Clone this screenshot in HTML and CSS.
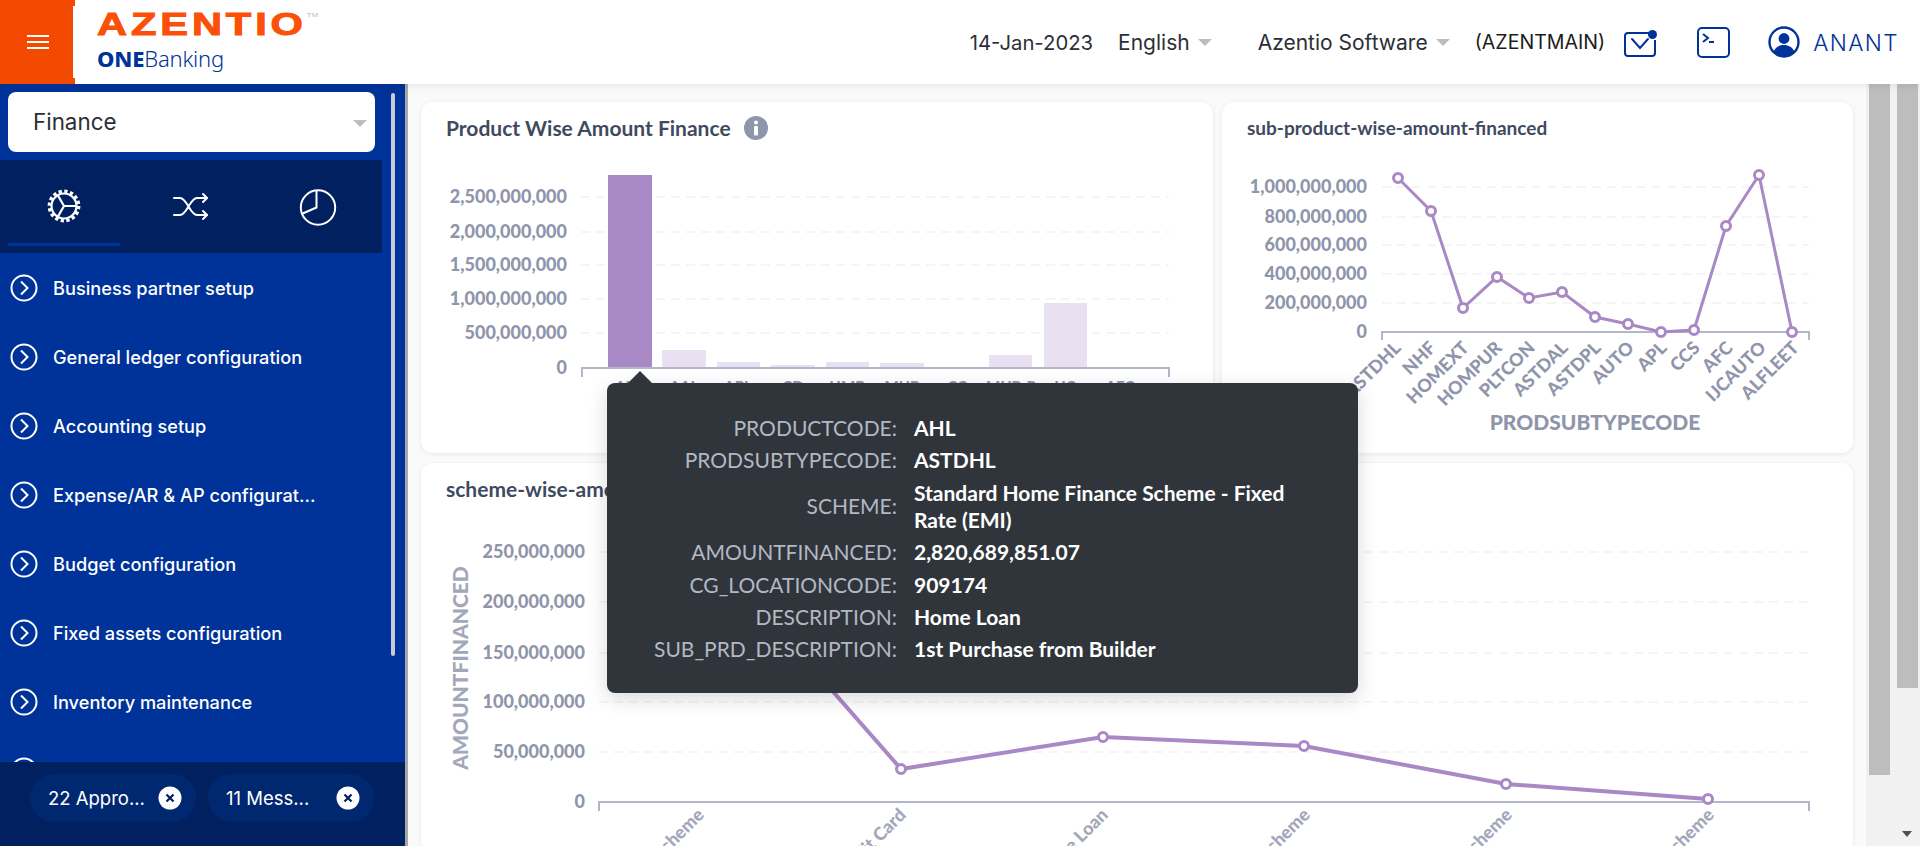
FILE: index.html
```html
<!DOCTYPE html>
<html lang="en">
<head>
<meta charset="utf-8">
<title>Azentio ONEBanking</title>
<link rel="stylesheet" href="styles.css">
</head>
<body>
<header class="topbar">
  <button class="burger" aria-label="Menu"><span></span><span></span><span></span></button>
  <div class="logo">
    <div class="logo-main">AZENTIO<sup>TM</sup></div>
    <div class="logo-sub"><b>ONE</b>Banking</div>
  </div>
  <div class="top-right">
    <span class="top-date">14-Jan-2023</span>
    <span class="top-drop lang">English<i class="caret"></i></span>
    <span class="top-drop comp">Azentio Software<i class="caret"></i></span>
    <span class="top-code">(AZENTMAIN)</span>
    <svg class="ic-mail" width="33" height="27" viewBox="0 0 33 27" fill="none" stroke="#003399" stroke-width="2"><path d="M25 3H4a3 3 0 0 0-3 3v17a3 3 0 0 0 3 3h24a3 3 0 0 0 3-3V10"/><path d="M8 9l8 9 8-9" stroke-linecap="round"/><circle cx="28.500" cy="4.500" r="4.500" fill="#003399" stroke="none"/></svg>
    <svg class="ic-term" width="33" height="31" viewBox="0 0 33 31" fill="none" stroke="#003399" stroke-width="2"><rect x="1" y="1" width="31" height="29" rx="4"/><path d="M6 7l5 4-5 4M12 15h5"/></svg>
    <svg class="ic-user" width="32" height="32" viewBox="0 0 32 32"><circle cx="16" cy="16" r="14.5" fill="none" stroke="#003399" stroke-width="2.4"/><circle cx="16" cy="12.5" r="5.4" fill="#003399"/><path d="M5.5 26c2-5 6-7 10.500-7s8.500 2 10.500 7a14 14 0 0 1-21 0z" fill="#003399"/></svg>
    <span class="top-user">ANANT</span>
  </div>
</header>

<div class="layout">
  <aside class="sidebar">
    <div class="module-select">Finance<i class="caret"></i></div>
    <div class="tabs">
      <div class="tab active">
        <svg width="36" height="36" viewBox="0 0 36 36" fill="none" stroke="#fff"><circle cx="18" cy="18" r="14.800" stroke-width="3.200" stroke-dasharray="3.300 2.500"/><circle cx="18" cy="18" r="12.500" stroke-width="2.200"/><path d="M18 18H30M18 18L12 7.600M18 18L12 28.400" stroke-width="2.200"/></svg>
      </div>
      <div class="tab">
        <svg width="36" height="30" viewBox="0 0 36 30" fill="none" stroke="#fff" stroke-width="2" stroke-linecap="round" stroke-linejoin="round"><path d="M1 6h6c7 0 10 17 17 17h10M1 23h6c7 0 10-17 17-17h10"/><path d="M30 2l4 4-4 4M30 19l4 4-4 4"/></svg>
      </div>
      <div class="tab">
        <svg width="38" height="38" viewBox="0 0 38 38" fill="none" stroke="#fff" stroke-width="2"><circle cx="19" cy="19.500" r="17.200"/><path d="M17.500 2v17.500L2.500 26"/></svg>
      </div>
    </div>
    <nav class="menu">
      <a class="menu-item"><svg width="28" height="28" viewBox="0 0 28 28" fill="none" stroke="#fff" stroke-width="2"><circle cx="14" cy="14" r="12.500"/><path d="M11 7.500l6.500 6.500-6.500 6.500"/></svg>Business partner setup</a>
      <a class="menu-item"><svg width="28" height="28" viewBox="0 0 28 28" fill="none" stroke="#fff" stroke-width="2"><circle cx="14" cy="14" r="12.500"/><path d="M11 7.500l6.500 6.500-6.500 6.500"/></svg>General ledger configuration</a>
      <a class="menu-item"><svg width="28" height="28" viewBox="0 0 28 28" fill="none" stroke="#fff" stroke-width="2"><circle cx="14" cy="14" r="12.500"/><path d="M11 7.500l6.500 6.500-6.500 6.500"/></svg>Accounting setup</a>
      <a class="menu-item"><svg width="28" height="28" viewBox="0 0 28 28" fill="none" stroke="#fff" stroke-width="2"><circle cx="14" cy="14" r="12.500"/><path d="M11 7.500l6.500 6.500-6.500 6.500"/></svg>Expense/AR &amp; AP configurat...</a>
      <a class="menu-item"><svg width="28" height="28" viewBox="0 0 28 28" fill="none" stroke="#fff" stroke-width="2"><circle cx="14" cy="14" r="12.500"/><path d="M11 7.500l6.500 6.500-6.500 6.500"/></svg>Budget configuration</a>
      <a class="menu-item"><svg width="28" height="28" viewBox="0 0 28 28" fill="none" stroke="#fff" stroke-width="2"><circle cx="14" cy="14" r="12.500"/><path d="M11 7.500l6.500 6.500-6.500 6.500"/></svg>Fixed assets configuration</a>
      <a class="menu-item"><svg width="28" height="28" viewBox="0 0 28 28" fill="none" stroke="#fff" stroke-width="2"><circle cx="14" cy="14" r="12.500"/><path d="M11 7.500l6.500 6.500-6.500 6.500"/></svg>Inventory maintenance</a>
      <a class="menu-item"><svg width="28" height="28" viewBox="0 0 28 28" fill="none" stroke="#fff" stroke-width="2"><circle cx="14" cy="14" r="12.500"/><path d="M11 7.500l6.500 6.500-6.500 6.500"/></svg></a>
    </nav>
    <div class="side-thumb"></div>
    <div class="chips">
      <div class="chip"><span>22 Appro...</span><svg width="24" height="24" viewBox="0 0 24 24"><circle cx="12" cy="12" r="11.500" fill="#fff"/><path d="M8.500 8.500l7 7M15.500 8.500l-7 7" stroke="#002060" stroke-width="2.200"/></svg></div>
      <div class="chip"><span>11 Mess...</span><svg width="24" height="24" viewBox="0 0 24 24"><circle cx="12" cy="12" r="11.500" fill="#fff"/><path d="M8.500 8.500l7 7M15.500 8.500l-7 7" stroke="#002060" stroke-width="2.200"/></svg></div>
    </div>
  </aside>

  <main class="content">
    <div class="row top-row">
      <section class="card card-a">
        <h3 class="card-title">Product Wise Amount Finance
          <svg class="info" width="24" height="24" viewBox="0 0 24 24"><circle cx="12" cy="12" r="12" fill="#8f95ab"/><circle cx="12" cy="6.500" r="2" fill="#fff"/><rect x="10" y="10" width="4" height="9.500" rx="1" fill="#fff"/></svg>
        </h3>
        <svg class="chart" viewBox="421 152 792 301">
          <g class="grid"><path d="M581 197H1169M581 232H1169M581 265H1169M581 299H1169M581 333H1169"/></g>
          <g class="tick-y" text-anchor="end">
            <text x="567" y="203">2,500,000,000</text><text x="567" y="238">2,000,000,000</text><text x="567" y="271">1,500,000,000</text><text x="567" y="305">1,000,000,000</text><text x="567" y="339">500,000,000</text><text x="567" y="374">0</text>
          </g>
          <rect class="bar-on" x="608" y="175" width="44" height="193"/>
          <g class="bar-off">
            <rect x="662" y="350" width="44" height="18"/><rect x="717" y="362" width="43" height="6"/><rect x="771" y="365" width="44" height="3"/><rect x="826" y="362" width="43" height="6"/><rect x="880" y="363" width="44" height="5"/><rect x="935" y="367" width="44" height="1"/><rect x="989" y="355" width="43" height="13"/><rect x="1044" y="303" width="43" height="65"/><rect x="1098" y="367" width="44" height="1"/>
          </g>
          <path class="axis" d="M582 377V368H1169V377"/>
          <g class="tick-x" text-anchor="middle">
            <text x="630" y="392">AHL</text><text x="684" y="392">AAL</text><text x="738" y="392">APL</text><text x="793" y="392">CD</text><text x="847" y="392">HMP</text><text x="902" y="392">MUP</text><text x="957" y="392">CC</text><text x="1011" y="392">MUP-P</text><text x="1065" y="392">UC</text><text x="1120" y="392">AFC</text>
          </g>
        </svg>
      </section>
      <section class="card card-b">
        <h3 class="card-title">sub-product-wise-amount-financed</h3>
        <svg class="chart" viewBox="1222 152 631 301">
          <g class="grid"><path d="M1382 187H1809M1382 217H1809M1382 245H1809M1382 274H1809M1382 303H1809"/></g>
          <g class="tick-y" text-anchor="end">
            <text x="1367" y="193">1,000,000,000</text><text x="1367" y="223">800,000,000</text><text x="1367" y="251">600,000,000</text><text x="1367" y="280">400,000,000</text><text x="1367" y="309">200,000,000</text><text x="1367" y="338">0</text>
          </g>
          <path class="axis" d="M1382 340V332H1809V340"/>
          <polyline class="line thin" points="1398,178 1431,211 1463,308 1497,277 1529,298 1562,292 1595,317 1628,324 1661,332 1694,330 1726,226 1759,175 1792,332"/>
          <g class="dot">
            <circle cx="1398" cy="178" r="4.500"/><circle cx="1431" cy="211" r="4.500"/><circle cx="1463" cy="308" r="4.500"/><circle cx="1497" cy="277" r="4.500"/><circle cx="1529" cy="298" r="4.500"/><circle cx="1562" cy="292" r="4.500"/><circle cx="1595" cy="317" r="4.500"/><circle cx="1628" cy="324" r="4.500"/><circle cx="1661" cy="332" r="4.500"/><circle cx="1694" cy="330" r="4.500"/><circle cx="1726" cy="226" r="4.500"/><circle cx="1759" cy="175" r="4.500"/><circle cx="1792" cy="332" r="4.500"/>
          </g>
          <g class="tick-rot" text-anchor="end">
            <text transform="translate(1402 349) rotate(-45)">ASTDHL</text><text transform="translate(1437 349) rotate(-45)">NHF</text><text transform="translate(1470 349) rotate(-45)">HOMEXT</text><text transform="translate(1503 349) rotate(-45)">HOMPUR</text><text transform="translate(1536 349) rotate(-45)">PLTCON</text><text transform="translate(1569 349) rotate(-45)">ASTDAL</text><text transform="translate(1602 349) rotate(-45)">ASTDPL</text><text transform="translate(1635 349) rotate(-45)">AUTO</text><text transform="translate(1668 349) rotate(-45)">APL</text><text transform="translate(1701 349) rotate(-45)">CCS</text><text transform="translate(1734 349) rotate(-45)">AFC</text><text transform="translate(1767 349) rotate(-45)">IJCAUTO</text><text transform="translate(1800 349) rotate(-45)">ALFLEET</text>
          </g>
          <text class="axis-title" x="1595" y="430" text-anchor="middle">PRODSUBTYPECODE</text>
        </svg>
      </section>
    </div>
    <section class="card card-c">
      <h3 class="card-title">scheme-wise-amount-financed</h3>
      <svg class="chart" viewBox="421 513 1432 340">
        <g class="grid"><path d="M599 552H1809M599 602H1809M599 653H1809M599 702H1809M599 752H1809"/></g>
        <g class="tick-y" text-anchor="end">
          <text x="585" y="558">250,000,000</text><text x="585" y="608">200,000,000</text><text x="585" y="659">150,000,000</text><text x="585" y="708">100,000,000</text><text x="585" y="758">50,000,000</text><text x="585" y="808">0</text>
        </g>
        <text class="axis-title wide" transform="translate(468 668) rotate(-90)" text-anchor="middle">AMOUNTFINANCED</text>
        <path class="axis" d="M599 811V802H1809V811"/>
        <polyline class="line" points="699,539 901,769 1103,737 1304,746 1506,784 1708,799"/>
        <g class="dot">
          <circle cx="901" cy="769" r="4.500"/><circle cx="1103" cy="737" r="4.500"/><circle cx="1304" cy="746" r="4.500"/><circle cx="1506" cy="784" r="4.500"/><circle cx="1708" cy="799" r="4.500"/>
        </g>
        <g class="tick-slant" text-anchor="end">
          <text transform="translate(705 816) rotate(-45)">Fixed Scheme</text><text transform="translate(907 816) rotate(-45)">Credit Card</text><text transform="translate(1109 816) rotate(-45)">Home Loan</text><text transform="translate(1311 816) rotate(-45)">Lease Scheme</text><text transform="translate(1513 816) rotate(-45)">Auto Scheme</text><text transform="translate(1715 816) rotate(-45)">Fleet Scheme</text>
        </g>
      </svg>
    </section>
  </main>

  <div class="scroll-track inner"><div class="scroll-thumb"></div></div>
  <div class="scroll-track outer"><div class="scroll-thumb"></div><i class="scroll-down"></i></div>
</div>

<div class="tooltip">
  <div class="tip-key">PRODUCTCODE:</div><div class="tip-val">AHL</div>
  <div class="tip-key">PRODSUBTYPECODE:</div><div class="tip-val">ASTDHL</div>
  <div class="tip-key">SCHEME:</div><div class="tip-val">Standard Home Finance Scheme - Fixed Rate (EMI)</div>
  <div class="tip-key">AMOUNTFINANCED:</div><div class="tip-val">2,820,689,851.07</div>
  <div class="tip-key">CG_LOCATIONCODE:</div><div class="tip-val">909174</div>
  <div class="tip-key">DESCRIPTION:</div><div class="tip-val">Home Loan</div>
  <div class="tip-key">SUB_PRD_DESCRIPTION:</div><div class="tip-val">1st Purchase from Builder</div>
</div>
</body>
</html>
```

FILE: styles.css
```css
* { box-sizing: border-box; }
html, body { margin: 0; height: 846px; overflow: hidden; }
body { font-family: Inter, "Liberation Sans", sans-serif; background: #fff; position: relative; }

.topbar { height: 84px; background: #fff; display: flex; align-items: center; position: relative; z-index: 2; box-shadow: 0 2px 8px rgba(0,0,0,.08); }
.burger { width: 75px; height: 84px; border: 0; padding: 0 0 0 1px; background: #f44900; display: flex; flex-direction: column; justify-content: center; align-items: center; gap: 3.500px; position: relative; margin-right: 22px; }
.burger::after { content: ""; position: absolute; right: 0; top: 6px; bottom: 6px; width: 2px; background: #fff; }
.burger span { width: 22px; height: 2.500px; background: #fff; display: block; }
.logo { display: flex; flex-direction: column; margin-top: -5px; }
.logo-main { font-family: "Liberation Sans", sans-serif; font-weight: 700; font-size: 32px; line-height: 32px; letter-spacing: 3px; color: #fa5008; height: 32px; white-space: nowrap; transform: scaleX(1.3); transform-origin: 0 50%; -webkit-text-stroke: 1px #fa5008; }
.logo-main sup { font-size: 6px; font-weight: 400; letter-spacing: 0; vertical-align: 18px; line-height: 0; color: #bbb; -webkit-text-stroke: 0; }
.logo-sub { font-family: "Noto Sans", sans-serif; font-weight: 300; font-size: 22px; line-height: 28px; color: #003399; margin-top: 4px; letter-spacing: -.2px; }
.logo-sub b { font-weight: 800; }

.top-right { margin-left: auto; display: flex; align-items: center; font-size: 21px; color: #2c2f36; padding-right: 21px; }
.top-date { margin-right: 25px; font-size: 20.300px; }
.top-drop { display: flex; align-items: center; }
.lang { margin-right: 46px; }
.comp { margin-right: 25px; }
.caret { display: inline-block; width: 0; height: 0; border-left: 7px solid transparent; border-right: 7px solid transparent; border-top: 7px solid #bdbdbd; margin-left: 8px; }
.top-code { font-size: 19.600px; margin-right: 19px; color: #1c1c1c; }
.ic-mail { margin-right: 40px; margin-top: 3px; }
.ic-term { margin-right: 38px; }
.ic-user { margin-right: 13px; }
.top-user { font-size: 22.500px; font-weight: 300; letter-spacing: 1.400px; color: #003399; }

.layout { height: 762px; display: flex; position: relative; }

.sidebar { width: 408px; flex: none; background: #003399; border-right: 3px solid #a8a8a8; position: relative; display: flex; flex-direction: column; padding-top: 8px; overflow: hidden; }
.module-select { width: 367px; height: 60px; margin-left: 8px; background: #fff; border-radius: 8px; display: flex; align-items: center; justify-content: space-between; padding: 0 8px 2px 25px; font-size: 22.400px; color: #2b2f38; flex: none; }
.module-select .caret { margin: 4px 0 0; }
.tabs { width: 382px; height: 93px; margin-top: 8px; background: #002060; display: flex; flex: none; padding-left: 8px; }
.tab { width: 112px; height: 86px; display: flex; align-items: center; justify-content: center; padding-top: 8px; }
.tab + .tab { margin-left: 15px; }
.tab.active { border-bottom: 3px solid #003399; height: 86px; }
.menu { display: flex; flex-direction: column; padding: 0 0 0 10px; flex: none; }
.menu-item { height: 69px; display: flex; align-items: center; gap: 15px; color: #fff; font-size: 18.200px; font-weight: 500; letter-spacing: 0; flex: none; }
.side-thumb { position: absolute; left: 391px; top: 9px; width: 4px; height: 563px; border-radius: 2px; background: #c8ccd6; }
.chips { position: absolute; left: 0; right: 0; bottom: 0; height: 84px; background: #002060; display: flex; gap: 12px; padding: 12px 0 0 30px; }
.chip { height: 48px; border-radius: 24px; background: #002870; color: #fff; font-size: 18.500px; display: flex; align-items: center; justify-content: space-between; padding: 0 14px 0 18px; width: 166px; white-space: nowrap; }

.content { flex: 1; background: #fafafa; padding: 18px 13px 0; overflow: hidden; display: flex; flex-direction: column; gap: 10px; }
.row { display: flex; gap: 9px; flex: none; }
.card { background: #fff; border-radius: 12px; box-shadow: 0 1px 5px rgba(0,0,0,.08); display: flex; flex-direction: column; flex: none; }
.card-a { width: 792px; height: 351px; }
.card-b { width: 631px; height: 351px; }
.card-c { width: 100%; height: 390px; }
.card-title { margin: 0; height: 50px; padding: 2px 0 0 25px; font-family: Lato, sans-serif; font-size: 19px; font-weight: 700; line-height: 24px; color: #3f4a5f; display: flex; align-items: center; gap: 13px; flex: none; }
.card-a .card-title { font-size: 21px; }
.card-c .card-title { font-size: 21px; }
.info { flex: none; }
.chart { display: block; width: 100%; flex: 1; overflow: hidden; font-family: Lato, sans-serif; font-weight: 900; }
.card-c .chart { height: 340px; flex: none; }
.grid path { fill: none; stroke: #f2f2f2; stroke-width: 1.500; stroke-dasharray: 9 6; }
.tick-y text { font-size: 18px; fill: #8f95ab; }
.tick-x text { font-size: 15px; fill: #8f95ab; }
.tick-rot text { font-size: 18px; fill: #8f95ab; }
.tick-slant text { font-size: 18px; fill: #a3a7ba; }
.axis { fill: none; stroke: #b3b6c6; stroke-width: 2; }
.axis-title { font-size: 21px; fill: #8f95ab; }
.axis-title.wide { font-size: 21px; fill: #a3a7ba; }
.bar-on { fill: #a888c5; }
.bar-off rect { fill: #e9e1f1; }
.line { fill: none; stroke: #a888c5; stroke-width: 4; }
.line.thin { stroke-width: 3; }
.dot circle { fill: #fff; stroke: #a888c5; stroke-width: 3; }

.scroll-track { flex: none; position: relative; background: #f1f1f1; height: 762px; }
.scroll-track.inner { width: 27px; padding-left: 3px; }
.scroll-track.inner .scroll-thumb { width: 21px; height: 691px; background: #bdbdbd; }
.scroll-track.outer { width: 27px; padding-left: 4px; }
.scroll-track.outer .scroll-thumb { width: 21px; height: 604px; background: #bdbdbd; }
.scroll-down { position: absolute; left: 9px; bottom: 9px; width: 0; height: 0; border-left: 5px solid transparent; border-right: 5px solid transparent; border-top: 6px solid #505050; }

.tooltip { position: absolute; left: 607px; top: 383px; width: 751px; height: 310px; z-index: 5; background: #2f353b; border-radius: 8px; box-shadow: 0 6px 20px rgba(0,0,0,.15); font-family: Lato, sans-serif; font-size: 21px; line-height: 27px; display: grid; grid-template-columns: 290px 385px; column-gap: 17px; row-gap: 5.400px; padding-top: 31px; align-content: start; align-items: center; color: #fff; }
.tooltip::before { content: ""; position: absolute; left: 21px; top: -12px; width: 0; height: 0; border-left: 12px solid transparent; border-right: 12px solid transparent; border-bottom: 12px solid #2f353b; }
.tip-key { text-align: right; color: #b4b8c4; font-weight: 400; }
.tip-val { font-weight: 700; color: #fff; }
```
